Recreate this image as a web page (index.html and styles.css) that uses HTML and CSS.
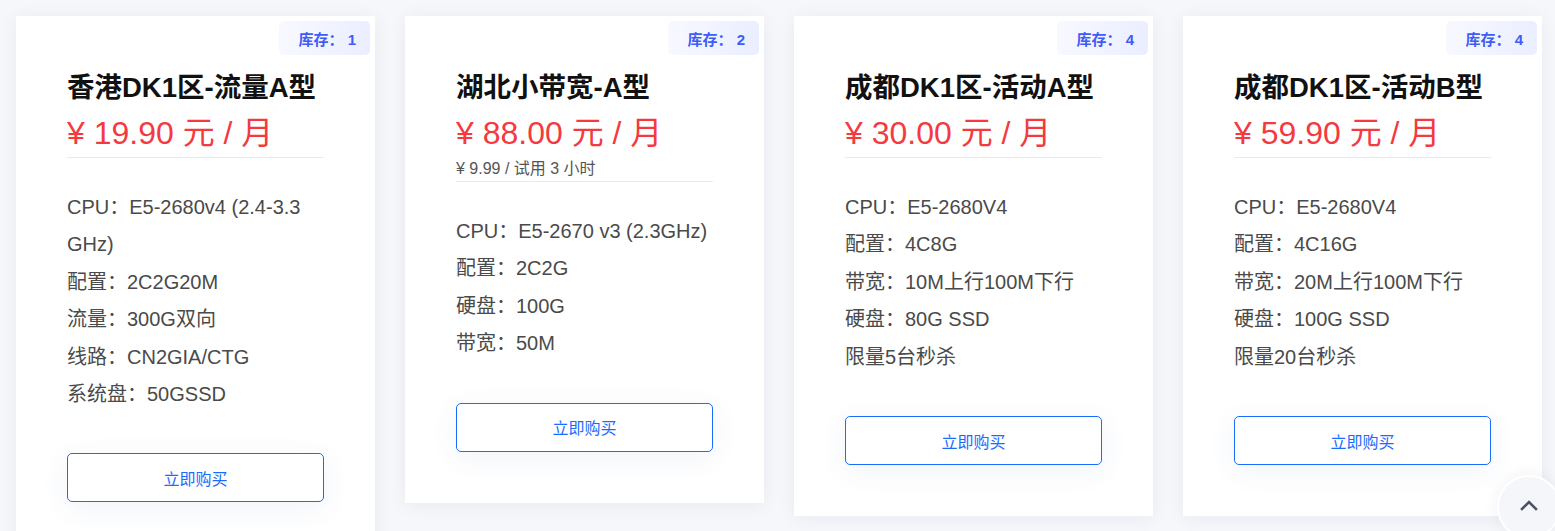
FILE: index.html
```html
<!DOCTYPE html>
<html lang="zh-CN">
<head>
<meta charset="utf-8">
<title>产品列表</title>
<link rel="stylesheet" href="styles.css">
</head>
<body>
<main class="plans">
  <section class="card">
    <div class="stock">库存： 1</div>
    <h2 class="title">香港DK1区-流量A型</h2>
    <div class="price-block">
      <div class="price">¥ 19.90 元 / 月</div>
    </div>
    <ul class="specs">
      <li>CPU：E5-2680v4 (2.4-3.3 GHz)</li>
      <li>配置：2C2G20M</li>
      <li>流量：300G双向</li>
      <li>线路：CN2GIA/CTG</li>
      <li>系统盘：50GSSD</li>
    </ul>
    <a class="buy" href="#">立即购买</a>
  </section>

  <section class="card">
    <div class="stock">库存： 2</div>
    <h2 class="title">湖北小带宽-A型</h2>
    <div class="price-block">
      <div class="price">¥ 88.00 元 / 月</div>
      <div class="trial">¥ 9.99 / 试用 3 小时</div>
    </div>
    <ul class="specs">
      <li>CPU：E5-2670 v3 (2.3GHz)</li>
      <li>配置：2C2G</li>
      <li>硬盘：100G</li>
      <li>带宽：50M</li>
    </ul>
    <a class="buy" href="#">立即购买</a>
  </section>

  <section class="card">
    <div class="stock">库存： 4</div>
    <h2 class="title">成都DK1区-活动A型</h2>
    <div class="price-block">
      <div class="price">¥ 30.00 元 / 月</div>
    </div>
    <ul class="specs">
      <li>CPU：E5-2680V4</li>
      <li>配置：4C8G</li>
      <li>带宽：10M上行100M下行</li>
      <li>硬盘：80G SSD</li>
      <li>限量5台秒杀</li>
    </ul>
    <a class="buy" href="#">立即购买</a>
  </section>

  <section class="card">
    <div class="stock">库存： 4</div>
    <h2 class="title">成都DK1区-活动B型</h2>
    <div class="price-block">
      <div class="price">¥ 59.90 元 / 月</div>
    </div>
    <ul class="specs">
      <li>CPU：E5-2680V4</li>
      <li>配置：4C16G</li>
      <li>带宽：20M上行100M下行</li>
      <li>硬盘：100G SSD</li>
      <li>限量20台秒杀</li>
    </ul>
    <a class="buy" href="#">立即购买</a>
  </section>
</main>

<a class="to-top" href="#" aria-label="返回顶部">
  <svg width="18" height="12" viewBox="0 0 18 12" aria-hidden="true">
    <path d="M2 10 L9 3 L16 10" fill="none" stroke="#4a5366" stroke-width="2.6" stroke-linecap="square" stroke-linejoin="miter"/>
  </svg>
</a>
</body>
</html>
```

FILE: styles.css
```css
* {
  box-sizing: border-box;
}

html, body {
  margin: 0;
  padding: 0;
}

body {
  background: #f6f7fa;
  font-family: "Liberation Sans", "Noto Sans CJK SC", sans-serif;
  color: #4a4a4a;
  height: 531px;
  overflow: hidden;
}

.plans {
  display: flex;
  align-items: flex-start;
  gap: 30px;
  padding: 16px 0 0 16px;
}

.card {
  position: relative;
  width: 359px;
  flex: 0 0 359px;
  background: #ffffff;
  padding: 51px 51px 51px 51px;
  box-shadow: 0 2px 18px rgba(30, 40, 90, 0.06);
}

.stock {
  position: absolute;
  top: 5px;
  right: 5px;
  width: 91px;
  height: 34px;
  padding: 0 14px 0 0;
  display: flex;
  align-items: center;
  justify-content: flex-end;
  font-size: 15px;
  font-weight: bold;
  color: #3f5cf6;
  background: linear-gradient(90deg, #f8f9ff 0%, #eaeeff 100%);
  border-radius: 5px;
  white-space: pre;
}

.title {
  margin: 0;
  font-size: 27.5px;
  line-height: 42px;
  font-weight: bold;
  color: #111111;
}

.price-block {
  border-bottom: 1px solid #ebebeb;
}

.price {
  font-size: 32px;
  line-height: 48px;
  color: #f43a3f;
}

.trial {
  font-size: 16px;
  line-height: 24px;
  color: #555555;
}

.specs {
  list-style: none;
  margin: 31px 0 0 0;
  padding: 0;
  font-size: 20px;
  line-height: 37.4px;
  color: #4a4a4a;
}

.buy {
  display: flex;
  align-items: center;
  justify-content: center;
  margin-top: 40px;
  height: 49px;
  border: 1px solid #1a6cff;
  border-radius: 5px;
  font-size: 16px;
  color: #1a6cff;
  text-decoration: none;
  background: #ffffff;
  box-shadow: 0 6px 28px rgba(40, 80, 170, 0.07);
}

.to-top {
  position: fixed;
  right: -6px;
  bottom: -8px;
  width: 64px;
  height: 64px;
  border-radius: 50%;
  background: #f5f6f9;
  border: 2px solid #ffffff;
  box-shadow: 0 0 16px rgba(30, 40, 90, 0.07);
  display: flex;
  align-items: center;
  justify-content: center;
  padding-bottom: 4px;
}
```
